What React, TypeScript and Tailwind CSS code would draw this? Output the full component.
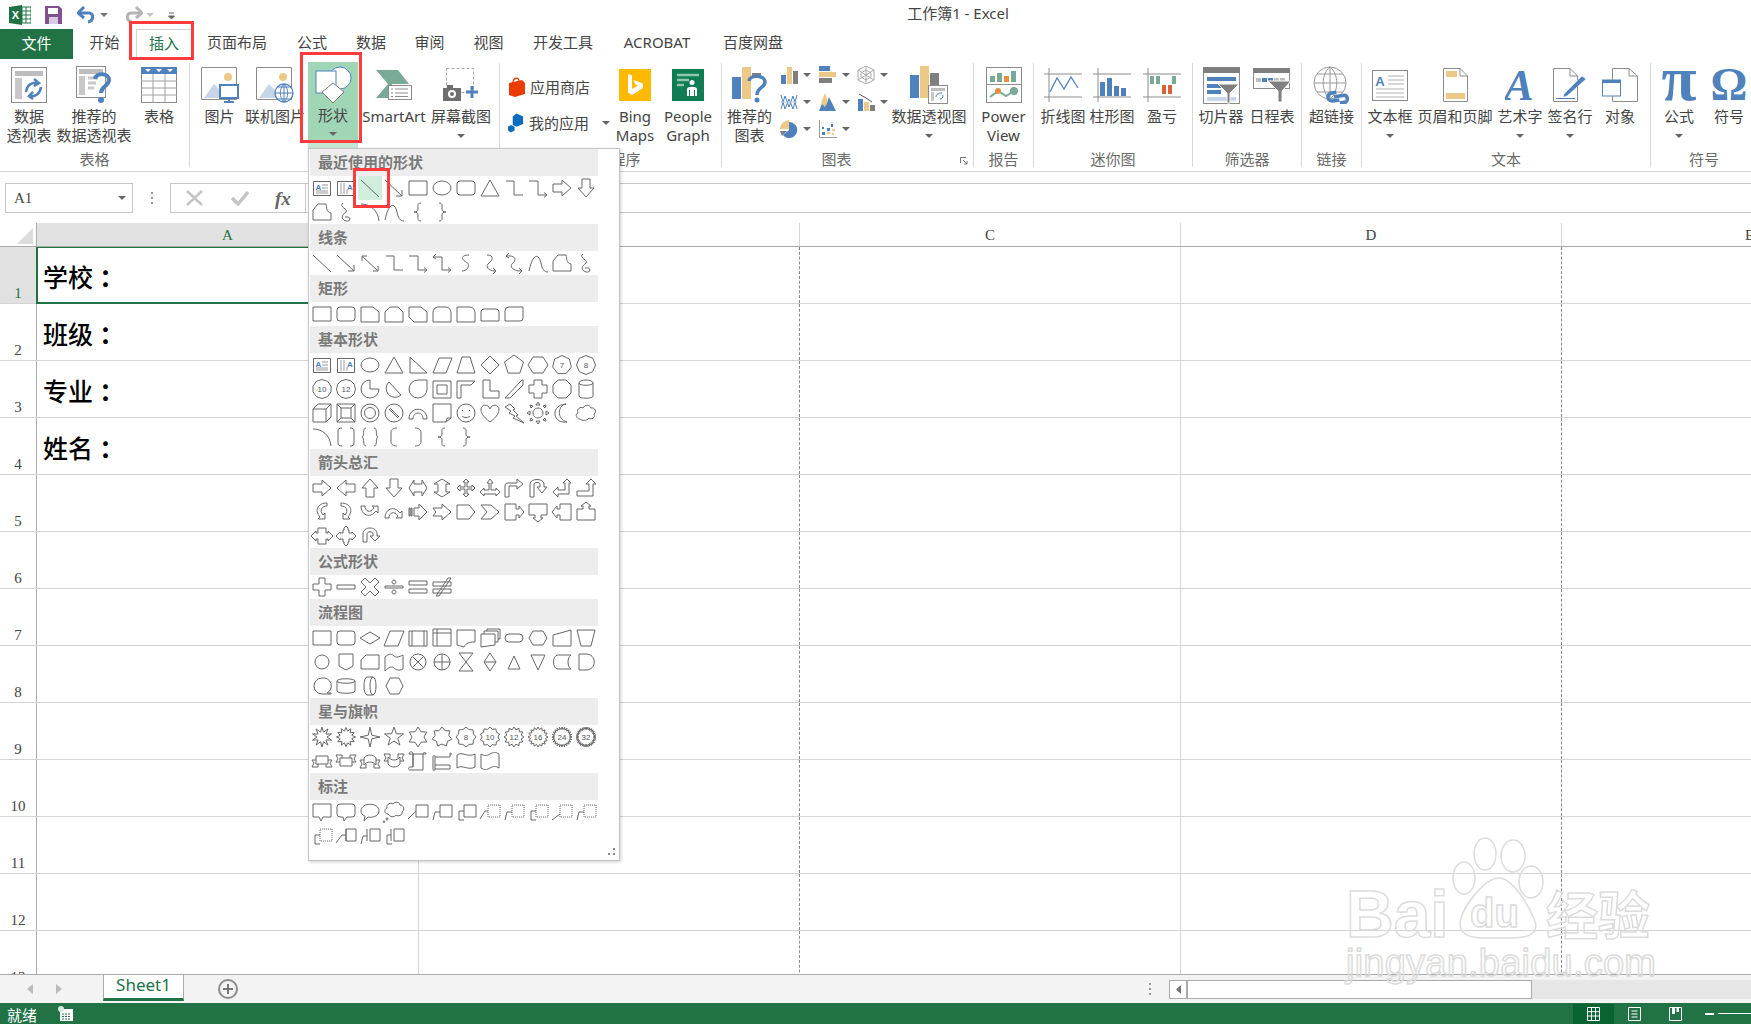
import type { ReactNode } from "react"

const BLUE = "#4f81bd"
const TAN = "#edc987"
const GRAY = "#7f7f7f"
const SAGE = "#78aa96"

function regular(n: number, R: number, rx = R) {
  const pts: string[] = []
  for (let i = 0; i < n; i++) {
    const a = (Math.PI * 2 * i) / n - Math.PI / 2
    pts.push((12 + rx * Math.cos(a)).toFixed(1) + " " + (12 + R * Math.sin(a)).toFixed(1))
  }
  return "M" + pts.join("L") + "Z"
}

function star(n: number, R: number, r: number) {
  const pts: string[] = []
  for (let i = 0; i < n * 2; i++) {
    const a = (Math.PI * i) / n - Math.PI / 2
    const k = i % 2 ? r : R
    pts.push((12 + k * Math.cos(a)).toFixed(1) + " " + (12 + k * Math.sin(a)).toFixed(1))
  }
  return "M" + pts.join("L") + "Z"
}

type Item = string | { d: string; t?: string; dot?: string }

const line = "M3 4L21 21"
const arrowLine = "M3 4L20 20M20 14V20H14"
const dblArrow = "M4 5L20 20M4 10V5H9M20 15V20H15"
const rect = "M3 5H21V19H3Z"
const ellipse = "M3 12a9 7 0 1 0 18 0a9 7 0 1 0-18 0Z"
const round = "M6 5H18a3 3 0 0 1 3 3V16a3 3 0 0 1-3 3H6a3 3 0 0 1-3-3V8a3 3 0 0 1 3-3Z"
const tri = "M12 4L21 20H3Z"
const elbow = "M4 5H12V19H21"
const elbowArrow = "M3 5H12V19H20M18 16.5l3 2.5-3 2.5"
const right = "M3 8H12V4L21 12L12 20V16H3Z"
const left = "M21 8H12V4L3 12L12 20V16H21Z"
const up = "M8 21V12H4L12 3L20 12H16V21Z"
const down = "M8 3V12H4L12 21L20 12H16V3Z"
const free = "M3 20V10L8 4H16C17 8 16 12 21 13V20Z"
const scribble = "M9 3C4 7 15 9 12 12C8 15 6 19 12 21C17 22 18 16 11 17"
const curve = "M3 20C7 1 13 3 15 12C16 18 18 21 22 21"
const lb = "M15 3C11 3 12 6 12 9C12 11 11 12 8 12C11 12 12 13 12 15C12 18 11 21 15 21"
const rb = "M9 3C13 3 12 6 12 9C12 11 13 12 16 12C13 12 12 13 12 15C12 18 13 21 9 21"
const cloud = "M6 18C2 18 1 13 4 12C2 8 7 5 9 7C11 3 16 4 17 7C21 6 23 11 20 13C22 17 17 19 15 17C13 20 8 20 6 18Z"

const recent: Item[] = ["tb", "vtb", line, arrowLine, rect, ellipse, round, tri, elbow, elbowArrow, right, down, free, scribble, "M3 4C12 4 20 10 21 21", curve, lb, rb]
const lines: Item[] = [line, arrowLine, dblArrow, elbow, elbowArrow, "M6 3L3 6L6 8M3 6H12V19H20M18 16.5l3 2.5-3 2.5", "M15 4C6 4 8 9 12 11C17 13 14 20 8 20", "M9 4C17 4 14 10 11 12C7 15 10 20 17 20M15 17l3 3-3 3", "M7 2L4 5L7 7M4 5C15 4 14 10 11 12C7 15 10 20 19 20M17 17l3 3-3 3", curve, free, scribble]
const rects: Item[] = [rect, round, "M3 5H15L21 10V20H3Z", "M8 5H16L21 10V20H3V10Z", "M3 5H15L21 10V20H8L3 15Z", "M8 5H16C19 5 21 8 21 11V20H3V10C3 8 5 5 8 5Z", "M3 5H16C19 5 21 8 21 11V20H3Z", "M6 7H18a3 3 0 0 1 3 3V19H3V10a3 3 0 0 1 3-3Z", "M7 5H21V16a3 3 0 0 1-3 3H3V9a4 4 0 0 1 4-4Z"]
const basic: Item[] = ["tb", "vtb", ellipse, tri, "M4 4L21 20H4Z", "M9 5H22L16 20H3Z", "M8 4H16L21 20H3Z", "M12 3L21 12L12 21L3 12Z", regular(5, 10), "M7 4H17L22 12L17 20H7L2 12Z", { d: regular(7, 9.5), t: "7" }, { d: regular(8, 9.5), t: "8" },
  { d: regular(10, 9.5), t: "10" }, { d: regular(12, 9.5), t: "12" }, "M12 3A9 9 0 1 0 21 12H12Z", "M7 5A8.5 8.5 0 1 0 19 18Z", "M12 3H21V12A9 9 0 1 1 12 3Z", "M3 4H21V21H3ZM7 8V17H17V8Z", "M3 4H21L17 8H7V21L3 21Z", "M5 3H12V14H21V21H5Z", "M3 21L20 3H21V8L8 21Z", "M8 3H16V8H21V16H16V21H8V16H3V8H8Z", "M8 3H16L21 8V16L16 21H8L3 16V8Z", "M5 6V19C5 22 19 22 19 19V6C19 2 5 2 5 6C5 9 19 9 19 6",
  "M3 8L8 3H21V16L16 21H3ZM3 8H16V21M16 8L21 3", "M3 3H21V21H3ZM7 7H17V17H7ZM3 3L7 7M21 3L17 7M3 21L7 17M21 21L17 17", "M3 12a9 9 0 1 0 18 0a9 9 0 1 0-18 0ZM6.5 12a5.5 5.5 0 1 0 11 0a5.5 5.5 0 1 0-11 0Z", "M3 12a9 9 0 1 0 18 0a9 9 0 1 0-18 0ZM7 8L16 17M8 7L17 16", "M3 18C3 5 21 5 21 18H17C17 10 7 10 7 18Z", "M3 3H21V17L16 21H3ZM16 21L17 17H21", "M3 12a9 9 0 1 0 18 0a9 9 0 1 0-18 0ZM8 9.5h1M15 9.5h1M8 15C10 17 14 17 16 15", "M12 21C4 15 3 11 3 8C3 4 10 2 12 8C14 2 21 4 21 8C21 11 20 15 12 21Z", "M8 3L13 8L11 9L16 14L14 15L22 22L11 17L13 15L7 12L9 10L3 6Z", "M12 7a5 5 0 1 0 .01 0ZM12 1L10 4H14ZM12 23L10 20H14ZM1 12L4 10V14ZM23 12L20 10V14ZM4 4L7 5L5 7ZM20 4L17 5L19 7ZM4 20L7 19L5 17ZM20 20L17 19L19 17Z", "M16 3C8 4 6 18 17 21C9 22 4 17 5 11C6 6 11 3 16 3Z", cloud,
  "M3 4C12 4 20 10 21 21", "M8 3C5 3 4 4 4 6V18C4 20 5 21 8 21M16 3C19 3 20 4 20 6V18C20 20 19 21 16 21", "M8 3C4 3 7 11 4 12C7 13 4 21 8 21M16 3C20 3 17 11 20 12C17 13 20 21 16 21", "M15 3C11 3 9 5 9 7V17C9 19 11 21 15 21", "M9 3C13 3 15 5 15 7V17C15 19 13 21 9 21", lb, rb]
const arrows: Item[] = [right, left, up, down, "M3 12L8 4V8H16V4L21 12L16 20V16H8V20Z", "M12 3L20 8H16V16H20L12 21L4 16H8V8H4Z", "M12 3L15 6H13V11H18V9L21 12L18 15V13H13V18H15L12 21L9 18H11V13H6V15L3 12L6 9V11H11V6H9Z", "M12 3L15 7H13V14H18V12L22 16L18 20V18H6V20L2 16L6 12V14H11V7H9Z", "M3 21V10C3 8 4 7 6 7H15V3L21 8L15 13V10H7V21Z", "M4 21V8C4 2 18 2 18 8V11H21L16 17L11 11H14V8C14 6 8 6 8 8V21Z", "M3 16L8 11V14H15V7H13L17 3L21 7H19V18H8V21Z", "M3 15H15V8H12L17 3L22 8H19V20H3Z",
  "M17 3C8 3 4 10 10 17L8 19H15V13L13 15C9 10 12 6 17 6Z", "M7 3C16 3 20 10 14 17L16 19H9V13L11 15C15 10 12 6 7 6Z", "M3 6C3 15 12 19 18 11L20 13V6H14L16 8C12 14 7 11 7 6Z", "M3 18C3 9 12 5 18 13L20 11V18H14L16 16C12 10 7 13 7 18Z", "M3 8H4V16H3ZM5 8H6V16H5ZM8 8H13V4L21 12L13 20V16H8Z", "M3 8H12V4L21 12L12 20V16H3L6 12Z", "M3 5H15L21 12L15 19H3Z", "M3 5H13L21 12L13 19H3L9 12Z", "M3 4H14V9H17V6L22 12L17 18V15H14V20H3Z", "M3 4H21V15H15V18H17L12 22L7 18H9V15H3Z", "M21 4H10V9H7V6L2 12L7 18V15H10V20H21Z", "M3 20H21V9H15V6H17L12 2L7 6H9V9H3Z",
  "M8 4H16V9H18V7L23 12L18 17V15H16V20H8V15H6V17L1 12L6 7V9H8Z", "M9 6H10V4L12 2L14 4V6H15V9H18V8L22 12L18 16V15H15V18H14V20L12 22L10 20V18H9V15H6V16L2 12L6 8V9H9Z", "M5 18V10C5 2 19 2 19 10V12H22L17 17L12 12H15V10C15 7 9 7 9 10V18Z"]
const equation: Item[] = ["M9 3H15V9H21V15H15V21H9V15H3V9H9Z", "M3 10H21V14H3Z", "M7 3L12 8L17 3L21 7L16 12L21 17L17 21L12 16L7 21L3 17L8 12L3 7Z", "M3 11H21V13H3ZM12 5a2 2 0 1 0 .01 0ZM12 15a2 2 0 1 0 .01 0Z", "M3 6H21V10H3ZM3 14H21V18H3Z", "M3 7H21V11H3ZM3 14H21V18H3ZM6 21L18 3L21 3L9 21Z"]
const flow: Item[] = [rect, round, "M12 6L22 12L12 18L2 12Z", "M8 5H22L16 20H2Z", "M3 5H21V20H3ZM6 5V20M18 5V20", "M3 3H21V20H3ZM3 7H21M7 3V20", "M3 4H21V16C15 16 12 17 10 21L3 19Z", "M3 8H17V19L3 21ZM6 8V5H20V16H17M9 5V3H22V13H20", "M7 8H17a4 4 0 0 1 0 8H7a4 4 0 0 1 0-8Z", "M7 5H17L21 12L17 19H7L3 12Z", "M3 9L21 4V20H3Z", "M3 4H21L17 20H7Z",
  "M5 12a7 7 0 1 0 14 0a7 7 0 1 0-14 0Z", "M5 4H19V16L12 20L5 16Z", "M8 5H21V19H3V10Z", "M3 7C7 3 10 4 12 6C14 8 17 7 21 5V19C17 21 14 20 12 18C10 16 7 17 3 21Z", "M4 12a8 8 0 1 0 16 0a8 8 0 1 0-16 0ZM6.5 6.5L17.5 17.5M17.5 6.5L6.5 17.5", "M4 12a8 8 0 1 0 16 0a8 8 0 1 0-16 0ZM4 12H20M12 4V20", "M5 3H19L5 21H19Z", "M12 3L18 12L12 21L6 12ZM6 12H18", "M12 6L18 19H6Z", "M5 5H19L12 20Z", "M8 5H21C17 8 17 16 21 19H8C2 19 2 5 8 5Z", "M5 4H12C23 4 23 20 12 20H5Z",
  "M12 4a8 8 0 1 0 0 16H21V19H17A8 8 0 0 0 12 4Z", "M3 7C3 4 21 4 21 7V17C21 20 3 20 3 17ZM3 7C3 10 21 10 21 7", "M9 3H15C19 3 19 21 15 21H9C5 21 5 3 9 3ZM15 3C11 3 11 21 15 21", "M8 4H17L21 12L17 20H8L4 12Z"]
const stars: Item[] = [star(10, 10, 5), star(12, 9.5, 6), star(4, 10, 2.5), star(5, 10, 4), star(6, 10, 6), star(7, 10, 7), { d: star(8, 10, 8), t: "8" }, { d: star(10, 10, 8), t: "10" }, { d: star(12, 10, 7.5), t: "12" }, { d: star(16, 10, 7.5), t: "16" }, { d: star(24, 10, 7.5), t: "24" }, { d: star(32, 10, 7.5), t: "32" },
  "M6 7H18V15H6ZM6 11H2L4 14L2 18H8V15M18 11H22L20 14L22 18H16V15", "M6 9H18V17H6ZM6 13H2L4 10L2 6H8V9M18 13H22L20 10L22 6H16V9", "M6 9C9 5 15 5 18 9V16C15 12 9 12 6 16ZM6 11H2L4 15L2 19H8V15M18 11H22L20 15L22 19H16V15", "M6 8C9 12 15 12 18 8V15C15 19 9 19 6 15ZM6 12H2L4 9L2 5H8V9M18 12H22L20 9L22 5H16V9", "M7 5C7 2 3 2 3 5H20C20 3 17 3 17 5V21H4C2 21 2 18 4 18H7ZM7 5V18", "M3 8C3 6 5 6 5 8V20C5 22 3 22 3 20ZM5 8H20V4C22 4 22 6 20 6M5 20H20V16H5", "M3 6C8 2 14 9 21 5V18C14 22 8 15 3 19Z", "M3 5C6 7 9 7 12 5C15 3 18 3 21 5V19C18 17 15 17 12 19C9 21 6 21 3 19Z"]
const callouts: Item[] = ["M3 4H21V17H13L11 21L9 17H3Z", "M6 4H18a3 3 0 0 1 3 3V14a3 3 0 0 1-3 3H13L10 21L9 17H6a3 3 0 0 1-3-3V7a3 3 0 0 1 3-3Z", "M3 11C3 2 21 2 21 11C21 17 12 18 10 17L6 21L7 16C4 15 3 13 3 11Z", "M6 14C2 14 2 9 5 8C4 4 9 2 11 4C13 1 18 2 18 5C22 5 23 10 20 12C21 15 16 17 14 15C12 18 8 17 6 14ZM5 18a1 1 0 1 0 .01 0ZM2 21a.8.8 0 1 0 .01 0Z", "M10 5H22V17H10ZM10 11L2 19", "M10 5H22V17H10ZM10 12H5L3 20", "M10 5H22V17H10ZM10 11H5V20H10", { d: "M10 11L7 11L2 19", dot: "M10 5H22V17H10Z" }, { d: "M10 12H5L3 20", dot: "M10 5H22V17H10Z" }, { d: "M10 11H5V20H10", dot: "M10 5H22V17H10Z" }, { d: "M10 14L2 20", dot: "M10 5H22V17H10Z" }, { d: "M10 12H5L3 20", dot: "M10 5H22V17H10Z" },
  { d: "M10 11H5V20H10", dot: "M10 5H22V17H10Z" }, "M12 5H22V17H12ZM12 11L8 11L2 19M12 5V17", "M12 5H22V17H12ZM9 5V17M9 12H5L3 20", "M12 5H22V17H12ZM9 5V17M9 11H5V20H10"]

const sections: { title: string; items: Item[] }[] = [
  { title: "最近使用的形状", items: recent },
  { title: "线条", items: lines },
  { title: "矩形", items: rects },
  { title: "基本形状", items: basic },
  { title: "箭头总汇", items: arrows },
  { title: "公式形状", items: equation },
  { title: "流程图", items: flow },
  { title: "星与旗帜", items: stars },
  { title: "标注", items: callouts },
]

function ShapeGlyph({ item }: { item: Item }) {
  if (item === "tb" || item === "vtb") {
    return (
      <svg width="24" height="24" viewBox="0 0 24 24" fill="none" stroke="#666" strokeWidth="1">
        <path d="M3.5 5.5H20.5V19.5H3.5Z" />
        {item === "tb" ? <path d="M12 9H18M12 12H18M6 15H18M6 17H18" stroke="#999" /> : <path d="M7 7V18M10 7V18M13 14V18" stroke="#999" />}
        <text x={item === "tb" ? 8.5 : 16} y="13.5" fontSize="8" fontWeight="700" textAnchor="middle" fill={BLUE} stroke="none" fontFamily="Liberation Sans, sans-serif">A</text>
      </svg>
    )
  }
  const d = typeof item === "string" ? item : item.d
  const t = typeof item === "string" ? undefined : item.t
  const dot = typeof item === "string" ? undefined : item.dot
  return (
    <svg width="24" height="24" viewBox="0 0 24 24" fill="none" stroke="#666" strokeWidth="1">
      <path d={d} />
      {dot && <path d={dot} strokeDasharray="1 1" />}
      {t && <text x="12" y="15" fontSize="8" textAnchor="middle" fill="#555" stroke="none" fontFamily="Liberation Sans, sans-serif">{t}</text>}
    </svg>
  )
}

function Caret({ color = "#666" }: { color?: string }) {
  return (
    <svg width="8" height="4" viewBox="0 0 8 4" className="shrink-0">
      <path d="M0 0H8L4 4Z" fill={color} />
    </svg>
  )
}

function RibbonButton({ w, icon, lines, caret, className = "" }: { w: number; icon: ReactNode; lines: string[]; caret?: boolean; className?: string }) {
  return (
    <div className={"flex shrink-0 flex-col items-center " + className} style={{ width: w }}>
      <div className="flex h-[44px] items-center justify-center">{icon}</div>
      {lines.map((l) => (
        <div key={l} className="h-[19px] whitespace-nowrap text-[15px] leading-[19px]">{l}</div>
      ))}
      {caret && <div className="flex h-[19px] items-center justify-center"><Caret /></div>}
    </div>
  )
}

function Group({ w, label, labelClass = "", children }: { w: number; label: string; labelClass?: string; children: ReactNode }) {
  return (
    <div className="relative flex shrink-0 flex-col border-r border-[#d8d8d8]" style={{ width: w }}>
      <div className="flex h-[89px]">{children}</div>
      <div className={"h-[16px] whitespace-nowrap text-center text-[15px] leading-[16px] text-[#6a6a6a] " + labelClass}>{label}</div>
    </div>
  )
}

function PivotIcon() {
  return (
    <svg width="36" height="36" viewBox="0 0 36 36">
      <rect x=".5" y=".5" width="35" height="35" fill="#fff" stroke="#8c8c8c" />
      <rect x="4" y="4" width="28" height="5" fill="#bdbdbd" />
      <rect x="4" y="11" width="7" height="21" fill="#c8c8c8" />
      <path d="M15 25C16 17 22 15 27 16M23 12L28 16L23 19M30 20C29 27 24 30 19 29M22 25L18 29L22 32" fill="none" stroke={BLUE} strokeWidth="2.5" />
    </svg>
  )
}

function RecPivotIcon() {
  return (
    <svg width="36" height="38" viewBox="0 0 36 38">
      <rect x=".5" y=".5" width="29" height="31" fill="#fff" stroke="#8c8c8c" />
      <rect x="3" y="3" width="24" height="5" fill="#bdbdbd" />
      <rect x="3" y="10" width="6" height="19" fill="#c8c8c8" />
      <path d="M12 12H22M12 17H20M12 22H18" stroke="#c8c8c8" strokeWidth="3" />
      <path d="M19 13C20 6 33 7 33 14C33 20 25 20 25 27" fill="none" stroke={BLUE} strokeWidth="4" />
      <circle cx="25" cy="34" r="3" fill={BLUE} />
    </svg>
  )
}

function TableIcon() {
  return (
    <svg width="36" height="36" viewBox="0 0 36 36">
      <rect x=".5" y=".5" width="35" height="35" fill="#fff" stroke="#8c8c8c" />
      <rect x="0" y="0" width="36" height="7" fill={BLUE} />
      <path d="M4 2H10L7 5ZM15 2H21L18 5ZM26 2H32L29 5Z" fill="#fff" />
      <path d="M0 14H36M0 21H36M0 28H36M12 7V36M24 7V36" stroke="#a0a0a0" fill="none" />
    </svg>
  )
}

function PictureBase() {
  return (
    <>
      <path d="M.5 .5H35.5V32.5H.5Z" fill="#fff" stroke="#8c8c8c" />
      <circle cx="27" cy="10" r="4" fill={TAN} />
      <path d="M3 31L13 17L20 24L24 21L30 31Z" fill="#c6d5e8" />
    </>
  )
}

function PictureIcon() {
  return (
    <svg width="38" height="36" viewBox="0 0 38 36">
      <PictureBase />
      <rect x="19" y="18" width="18" height="13" fill="#fff" stroke={BLUE} strokeWidth="2" />
      <path d="M28 31V35M23 35H33" stroke={BLUE} strokeWidth="2" />
    </svg>
  )
}

function OnlinePictureIcon() {
  return (
    <svg width="38" height="36" viewBox="0 0 38 36">
      <PictureBase />
      <circle cx="28" cy="26" r="9" fill="#fff" stroke={BLUE} strokeWidth="1.3" />
      <path d="M19 26H37M28 17V35M21 20H35M21 32H35M28 17C23 22 23 30 28 35M28 17C33 22 33 30 28 35" fill="none" stroke={BLUE} />
    </svg>
  )
}

function ShapesIcon() {
  return (
    <svg width="38" height="40" viewBox="0 0 38 40">
      <circle cx="26" cy="14" r="11" fill="#fff" stroke={BLUE} />
      <rect x="2" y="7" width="20" height="22" fill="#fff" stroke={BLUE} />
      <path d="M19 19L30 28L19 39L8 28Z" fill="#fff" stroke={GRAY} />
    </svg>
  )
}

function SmartArtIcon() {
  return (
    <svg width="36" height="30" viewBox="0 0 36 30">
      <path d="M0 0H22L33 14H12Z" fill={SAGE} />
      <path d="M12 14L0 28H12L16 22V14Z" fill={SAGE} />
      <rect x="12.5" y="15.5" width="23" height="14" fill="#fff" stroke="#8c8c8c" />
      <path d="M15 19H17M19 19H32M15 23H17M19 23H32M15 26.5H17M19 26.5H32" stroke="#8c8c8c" />
    </svg>
  )
}

function ScreenshotIcon() {
  return (
    <svg width="36" height="34" viewBox="0 0 36 34">
      <rect x="3.5" y=".5" width="27" height="24" fill="none" stroke="#aaa" strokeDasharray="3 2" />
      <rect x="0" y="20" width="18" height="13" fill="#6e6e6e" />
      <rect x="4" y="17" width="6" height="3" fill="#6e6e6e" />
      <circle cx="9" cy="26" r="4" fill="#fff" />
      <circle cx="9" cy="26" r="2" fill="#6e6e6e" />
      <path d="M29 18V30M23 24H35" stroke={BLUE} strokeWidth="3" />
    </svg>
  )
}

function StoreIcon() {
  return (
    <svg width="18" height="20" viewBox="0 0 18 20">
      <path d="M1 6L14 3L17 6V17L7 20L1 18Z" fill="#eb3c00" />
      <path d="M5 6C5 0 11 0 11 4" fill="none" stroke="#eb3c00" strokeWidth="1.3" />
    </svg>
  )
}

function MyAppsIcon() {
  return (
    <svg width="18" height="20" viewBox="0 0 18 20">
      <path d="M9 0L16 3V11L9 14L5 12V3Z" fill="#0f6cbd" />
      <path d="M3 12L7 14V18L3 20L0 18V14Z" fill="#0f6cbd" />
    </svg>
  )
}

function BingIcon() {
  return (
    <svg width="32" height="32" viewBox="0 0 32 32">
      <rect width="32" height="32" fill="#ffb900" />
      <path d="M9 5L13 6.5V20L19 16.5L16 15L14.5 11L24 14.5V19L13 26L9 23.5Z" fill="#fff" />
    </svg>
  )
}

function PeopleIcon() {
  return (
    <svg width="32" height="32" viewBox="0 0 32 32">
      <rect width="32" height="32" fill="#107c54" />
      <path d="M5 6H27M5 11H17M5 16H12" stroke="#8fc7ae" strokeWidth="2.5" />
      <circle cx="20" cy="13.5" r="2.5" fill="#fff" />
      <path d="M15 27V20C15 17 25 17 25 20V27H23V21H22V27H18V21H17V27Z" fill="#fff" />
    </svg>
  )
}

function RecChartIcon() {
  return (
    <svg width="36" height="36" viewBox="0 0 36 36">
      <rect x="0" y="10" width="9" height="22" fill={BLUE} />
      <rect x="10" y="0" width="9" height="32" fill={TAN} />
      <rect x="20" y="6" width="9" height="4" fill={GRAY} />
      <path d="M17 14C18 7 33 8 33 15C33 21 25 20 25 28" fill="none" stroke={BLUE} strokeWidth="3.5" />
      <circle cx="25" cy="33" r="2.5" fill={BLUE} />
    </svg>
  )
}

function PivotChartIcon() {
  return (
    <svg width="38" height="38" viewBox="0 0 38 38">
      <rect x="0" y="9" width="9" height="23" fill={BLUE} />
      <rect x="10" y="0" width="9" height="32" fill={TAN} />
      <rect x="20" y="7" width="9" height="12" fill={GRAY} />
      <rect x="18.5" y="19.5" width="19" height="18" fill="#fff" stroke="#8c8c8c" />
      <rect x="21" y="22" width="14" height="3" fill="#bdbdbd" />
      <rect x="21" y="26" width="3" height="9" fill="#c8c8c8" />
      <path d="M26 31C26 28 29 27 32 27M30 33C32 33 33 32 33 29" fill="none" stroke={BLUE} />
    </svg>
  )
}

function SmallChart({ kind }: { kind: string }) {
  const g: Record<string, ReactNode> = {
    col: <><rect x="1" y="9" width="5" height="9" fill={BLUE} /><rect x="7" y="1" width="5" height="17" fill={TAN} /><rect x="13" y="5" width="5" height="13" fill={GRAY} /></>,
    bar: <><rect x="0" y="0" width="11" height="5" fill={BLUE} /><rect x="0" y="6" width="17" height="5" fill={TAN} /><rect x="0" y="12" width="13" height="5" fill={GRAY} /></>,
    radar: <path d="M9 0V18M1 4L17 14M17 4L1 14M9 0L17 4V14L9 18L1 14V4ZM9 4L14 7V11L9 14L4 11V7Z" fill="none" stroke="#aaa" />,
    line: <><path d="M1 2L5 16L9 6L13 16L17 2" fill="none" stroke={BLUE} /><path d="M1 16L5 3L9 14L13 3L17 16" fill="none" stroke={BLUE} /><path d="M1 9H17" stroke="#b0c7e0" /></>,
    area: <><path d="M0 18L4 8L7 12L10 4L17 18Z" fill={BLUE} /><path d="M2 10L6 0L9 8L6 14Z" fill={TAN} /></>,
    combo: <><rect x="1" y="6" width="5" height="12" fill={BLUE} /><rect x="7" y="9" width="5" height="9" fill={TAN} /><rect x="13" y="12" width="5" height="6" fill={GRAY} /><path d="M2 1L9 5L15 9" fill="none" stroke="#555" /></>,
    pie: <><path d="M9 2A8 8 0 1 1 3 15L9 10Z" fill={BLUE} /><path d="M9 0V9L0 9A9 9 0 0 1 9 0Z" fill={TAN} /><path d="M0 11H7L2 16Z" fill={GRAY} /></>,
    scatter: <><path d="M.5 0V17.5H18" fill="none" stroke="#999" /><path d="M3 12h3v3h-3zM8 8h3v3h-3zM12 4h2v3h-2zM3 7h2v2h-2z" fill={BLUE} /><path d="M8 12h3v2h-3zM13 9h3v2h-3zM13 13h2v2h-2z" fill={TAN} /></>,
  }
  return (
    <svg width="18" height="18" viewBox="0 0 18 18" className="shrink-0">{g[kind]}</svg>
  )
}

function PowerViewIcon() {
  return (
    <svg width="36" height="36" viewBox="0 0 36 36">
      <rect x=".5" y=".5" width="35" height="35" fill="#fff" stroke="#8c8c8c" />
      <path d="M.5 17.5H35.5" stroke="#8c8c8c" />
      <rect x="4" y="9" width="5" height="6" fill={SAGE} />
      <rect x="11" y="6" width="5" height="9" fill={SAGE} />
      <rect x="18" y="9" width="5" height="6" fill="#e58f3c" />
      <rect x="25" y="4" width="5" height="11" fill={SAGE} />
      <path d="M4 30L12 24L20 29L28 24" fill="none" stroke={SAGE} strokeWidth="2" />
      <circle cx="12" cy="24" r="3" fill="#e58f3c" />
      <circle cx="28" cy="24" r="4" fill={SAGE} />
    </svg>
  )
}

function Spark({ children }: { children: ReactNode }) {
  return (
    <svg width="38" height="34" viewBox="0 0 38 34">
      <path d="M0 6H38M0 29H38M5 0V34" stroke="#8c8c8c" fill="none" />
      {children}
    </svg>
  )
}

function SlicerIcon() {
  return (
    <svg width="37" height="37" viewBox="0 0 37 37">
      <rect x=".5" y=".5" width="36" height="36" fill="#fff" stroke="#8c8c8c" />
      <rect width="37" height="6" fill={GRAY} />
      <rect x="4" y="10" width="29" height="4" fill={BLUE} />
      <rect x="4" y="17" width="14" height="4" fill={BLUE} />
      <rect x="4" y="23" width="14" height="4" fill={BLUE} />
      <rect x="4" y="30" width="29" height="4" fill="#c6d5e8" />
      <path d="M15 17H36L27 26V36H24V26Z" fill={GRAY} stroke="#fff" />
    </svg>
  )
}

function TimelineIcon() {
  return (
    <svg width="38" height="34" viewBox="0 0 38 34">
      <rect x=".5" y=".5" width="36" height="20" fill="#fff" stroke="#8c8c8c" />
      <rect width="37" height="5" fill={GRAY} />
      <path d="M3 10h5v4h-5z" fill="#bdbdbd" />
      <path d="M9 10h5v4h-5zM15 10h5v4h-5z" fill={BLUE} />
      <path d="M21 10h5v4h-5zM27 10h5v4h-5z" fill="#bdbdbd" />
      <path d="M15 13H38L29 23V34H25V23Z" fill={GRAY} stroke="#fff" />
    </svg>
  )
}

function LinkIcon() {
  return (
    <svg width="38" height="38" viewBox="0 0 38 38">
      <circle cx="17" cy="17" r="16" fill="none" stroke="#999" />
      <path d="M1 17H33M17 1V33M4 8H30M4 26H30M17 1C8 8 8 26 17 33M17 1C26 8 26 26 17 33" fill="none" stroke="#999" />
      <path d="M24 26H19a4 4 0 0 0 0 8H26M21 30H32a4 4 0 0 1 0 7H26" transform="rotate(-8 26 31)" fill="none" stroke={BLUE} strokeWidth="3.5" />
    </svg>
  )
}

function TextBoxIcon() {
  return (
    <svg width="36" height="31" viewBox="0 0 36 31">
      <rect x=".5" y=".5" width="35" height="30" fill="#fff" stroke="#8c8c8c" />
      <text x="8" y="16" fontSize="13" fontWeight="700" textAnchor="middle" fill={BLUE} fontFamily="Liberation Sans, sans-serif">A</text>
      <path d="M16 6H32M16 10H32M16 14H32M4 19H32M4 23H32M4 27H32" stroke="#b0b0b0" />
    </svg>
  )
}

function HeaderIcon() {
  return (
    <svg width="25" height="34" viewBox="0 0 25 34">
      <path d="M.5 .5H17L24.5 8V33.5H.5Z" fill="#fff" stroke="#8c8c8c" />
      <path d="M17 .5V8H24.5" fill="none" stroke="#8c8c8c" />
      <rect x="3" y="3" width="11" height="6" fill={TAN} />
      <rect x="3" y="25" width="19" height="6" fill={TAN} />
    </svg>
  )
}

function WordArtIcon() {
  return (
    <svg width="30" height="34" viewBox="0 0 30 34">
      <text x="14" y="32" fontSize="44" fontWeight="700" fontStyle="italic" textAnchor="middle" fill={BLUE} fontFamily="Liberation Serif, serif">A</text>
    </svg>
  )
}

function SignIcon() {
  return (
    <svg width="34" height="35" viewBox="0 0 34 35">
      <path d="M.5 .5H17L24.5 8V33.5H.5Z" fill="#fff" stroke="#8c8c8c" />
      <path d="M17 .5V8H24.5" fill="none" stroke="#8c8c8c" />
      <path d="M3 30.5H22" stroke={BLUE} />
      <path d="M11 26L29 8L33 11L14 28L10 29Z" fill={BLUE} stroke="#fff" strokeWidth=".5" />
    </svg>
  )
}

function ObjectIcon() {
  return (
    <svg width="36" height="34" viewBox="0 0 36 34">
      <path d="M10.5 .5H27L35.5 8V33.5H10.5Z" fill="#fff" stroke="#8c8c8c" />
      <path d="M27 .5V8H35.5" fill="none" stroke="#8c8c8c" />
      <rect x=".5" y="12" width="18" height="16" fill="#fff" stroke={BLUE} />
      <rect x="0" y="12" width="19" height="3" fill={BLUE} />
    </svg>
  )
}

function Glyph({ c, w, size }: { c: string; w: number; size: number }) {
  return (
    <svg width={w} height="36" viewBox={"0 0 " + w + " 36"}>
      <text x={w / 2} y="33" fontSize={size} fontWeight="700" textAnchor="middle" fill={BLUE} fontFamily="Liberation Serif, serif">{c}</text>
    </svg>
  )
}

const tabs: [string, number][] = [["开始", 63], ["插入", 56], ["页面布局", 90], ["公式", 60], ["数据", 58], ["审阅", 59], ["视图", 59], ["开发工具", 90], ["ACROBAT", 98], ["百度网盘", 94]]

const rowData = ["学校", "班级", "专业", "姓名", "", "", "", "", "", "", "", "", ""]

function Ribbon() {
  return (
    <div className="flex h-[113px] shrink-0 border-b border-[#d4d4d4] bg-white py-[4px] text-[#444]">
      <Group w={190} label="表格">
        <RibbonButton w={58} icon={<PivotIcon />} lines={["数据", "透视表"]} />
        <RibbonButton w={72} icon={<RecPivotIcon />} lines={["推荐的", "数据透视表"]} />
        <RibbonButton w={58} icon={<TableIcon />} lines={["表格"]} />
      </Group>
      <Group w={310} label="插图">
        <RibbonButton w={59} icon={<PictureIcon />} lines={["图片"]} />
        <RibbonButton w={52} icon={<OnlinePictureIcon />} lines={["联机图片"]} />
        <RibbonButton w={50} icon={<ShapesIcon />} lines={["形状"]} caret className="ml-[7px] -mt-px h-[81px] bg-[#a0d6b6] pt-px" />
        <RibbonButton w={72} icon={<SmartArtIcon />} lines={["SmartArt"]} />
        <RibbonButton w={62} icon={<ScreenshotIcon />} lines={["屏幕截图"]} caret />
      </Group>
      <Group w={222} label="应用程序">
        <div className="flex w-[110px] shrink-0 flex-col gap-[16px] pl-[8px] pt-[14px]">
          <div className="flex h-[20px] items-center gap-[4px] whitespace-nowrap text-[15px]"><StoreIcon /><span>应用商店</span></div>
          <div className="flex h-[20px] items-center gap-[4px] whitespace-nowrap text-[15px]"><MyAppsIcon /><span>我的应用</span><span className="ml-[9px]"><Caret /></span></div>
        </div>
        <RibbonButton w={50} icon={<BingIcon />} lines={["Bing", "Maps"]} />
        <RibbonButton w={56} icon={<PeopleIcon />} lines={["People", "Graph"]} />
      </Group>
      <Group w={252} label="图表" labelClass="pr-[22px]">
        <RibbonButton w={55} icon={<RecChartIcon />} lines={["推荐的", "图表"]} />
        <div className="-mt-[2px] grid w-[113px] shrink-0 grid-cols-[39px_38px_36px] auto-rows-[27px]">
          {["col", "bar", "radar", "line", "area", "combo", "pie", "scatter"].map((k) => (
            <div key={k} className="flex items-center gap-[5px] pl-[3px]"><SmallChart kind={k} /><Caret /></div>
          ))}
        </div>
        <RibbonButton w={78} icon={<PivotChartIcon />} lines={["数据透视图"]} caret />
        <svg width="8" height="8" viewBox="0 0 8 8" className="absolute bottom-[2px] right-[5px]">
          <path d="M.5 6V.5H6M3 3L7 7M7 4V7H4" fill="none" stroke="#777" />
        </svg>
      </Group>
      <Group w={60} label="报告">
        <RibbonButton w={59} icon={<PowerViewIcon />} lines={["Power", "View"]} />
      </Group>
      <Group w={159} label="迷你图">
        <RibbonButton w={58} icon={<Spark><path d="M6 24L13 10L20 21L27 9L34 20" fill="none" stroke={BLUE} strokeWidth="1.3" /></Spark>} lines={["折线图"]} />
        <RibbonButton w={40} icon={<Spark><path d="M7 14h5v14h-5zM14 10h5v18h-5zM21 18h5v10h-5zM28 20h5v8h-5z" fill={BLUE} /></Spark>} lines={["柱形图"]} />
        <RibbonButton w={60} icon={<Spark><path d="M7 8h4v8h-4zM13 8h4v8h-4zM29 8h4v8h-4z" fill={SAGE} /><path d="M19 17h4v9h-4zM25 17h4v9h-4z" fill="#d9623b" /></Spark>} lines={["盈亏"]} />
      </Group>
      <Group w={109} label="筛选器">
        <RibbonButton w={56} icon={<SlicerIcon />} lines={["切片器"]} />
        <RibbonButton w={46} icon={<TimelineIcon />} lines={["日程表"]} />
      </Group>
      <Group w={60} label="链接">
        <RibbonButton w={59} icon={<LinkIcon />} lines={["超链接"]} />
      </Group>
      <Group w={289} label="文本">
        <RibbonButton w={56} icon={<TextBoxIcon />} lines={["文本框"]} caret />
        <RibbonButton w={74} icon={<HeaderIcon />} lines={["页眉和页脚"]} />
        <RibbonButton w={56} icon={<WordArtIcon />} lines={["艺术字"]} caret />
        <RibbonButton w={44} icon={<SignIcon />} lines={["签名行"]} caret />
        <RibbonButton w={56} icon={<ObjectIcon />} lines={["对象"]} />
      </Group>
      <div className="relative flex w-[100px] shrink-0 flex-col">
        <div className="flex h-[89px]">
          <RibbonButton w={56} icon={<Glyph c="π" w={34} size={64} />} lines={["公式"]} caret />
          <RibbonButton w={44} icon={<Glyph c="Ω" w={34} size={46} />} lines={["符号"]} />
        </div>
        <div className="h-[16px] pl-[6px] text-center text-[15px] leading-[16px] text-[#6a6a6a]">符号</div>
      </div>
    </div>
  )
}

function ShapesMenu() {
  return (
    <div className="absolute left-[308px] top-[148px] z-10 h-[713px] w-[312px] border border-[#c6c6c6] bg-white pl-[1px] shadow-[1px_1px_3px_rgba(0,0,0,0.2)]">
      {sections.map((s) => (
        <div key={s.title} className="w-[288px]">
          <div className="h-[27px] bg-[#ededed] pl-[8px] text-[15px] font-bold leading-[27px] text-[#7a7a7a]">{s.title}</div>
          <div className="grid grid-cols-[repeat(12,24px)] auto-rows-[24px]">
            {s.items.map((it, i) => (
              <div key={i} className={s.title === "最近使用的形状" && i === 2 ? "bg-[#d2eedd]" : ""}>
                <ShapeGlyph item={it} />
              </div>
            ))}
          </div>
        </div>
      ))}
      <svg width="10" height="10" viewBox="0 0 10 10" className="absolute bottom-[3px] right-[3px]">
        <path d="M7 1h2v2h-2zM7 6h2v2h-2zM2 6h2v2h-2z" fill="#888" />
      </svg>
    </div>
  )
}

function Watermark() {
  return (
    <svg width="330" height="160" viewBox="0 0 330 160" className="pointer-events-none absolute left-[1340px] top-[832px] z-20" fill="none" stroke="#dcdcdc" strokeWidth="1.5">
      <ellipse cx="124" cy="46" rx="11" ry="16" />
      <ellipse cx="145" cy="22" rx="11" ry="16" />
      <ellipse cx="173" cy="24" rx="12" ry="16" />
      <ellipse cx="191" cy="50" rx="12" ry="16" />
      <path d="M159 46C175 46 196 86 196 94C196 108 172 106 158 106C142 106 120 108 120 92C120 78 144 46 159 46Z" />
      <g fontFamily="Liberation Sans, sans-serif" fontWeight="700">
        <text x="6" y="105" fontSize="66">Bai</text>
        <text x="130" y="95" fontSize="40">du</text>
      </g>
      <text x="206" y="103" fontSize="52" fontWeight="700" fontFamily="Noto Sans CJK SC, sans-serif">经验</text>
      <text x="6" y="144" fontSize="38" textLength="310" fontFamily="Liberation Sans, sans-serif">jingyan.baidu.com</text>
    </svg>
  )
}

export default function App() {
  return (
    <div className="relative flex h-[1024px] w-[1751px] flex-col overflow-hidden bg-white [font-family:'Noto_Sans','Noto_Sans_CJK_SC',sans-serif]">
      {/* title bar */}
      <div className="relative flex h-[29px] shrink-0 items-center bg-white pl-[9px]">
        <svg width="22" height="20" viewBox="0 0 22 20">
          <path d="M0 2L13 0V20L0 18Z" fill="#207245" />
          <path d="M13 2H22V18H13Z" fill="#fff" stroke="#207245" />
          <path d="M13 6H22M13 10H22M13 14H22M17 2V18" stroke="#207245" />
          <text x="6.5" y="14" fontSize="11" fontWeight="700" fill="#fff" textAnchor="middle" fontFamily="Liberation Sans, sans-serif">X</text>
        </svg>
        <svg width="17" height="18" viewBox="0 0 17 18" className="ml-[14px]">
          <path d="M0 0H14L17 3V18H0Z" fill="#80508f" />
          <rect x="3" y="2" width="10" height="6" fill="#fff" />
          <rect x="4" y="11" width="9" height="7" fill="#d9c9e0" />
        </svg>
        <svg width="20" height="18" viewBox="0 0 20 18" className="ml-[15px]">
          <path d="M3 7H12C17 7 17 15 11 16" fill="none" stroke={BLUE} strokeWidth="3" />
          <path d="M7 1L1 7L7 12" fill="none" stroke={BLUE} strokeWidth="3" />
        </svg>
        <span className="ml-[3px]"><Caret color="#777" /></span>
        <svg width="20" height="18" viewBox="0 0 20 18" className="ml-[15px]">
          <path d="M17 7H8C3 7 3 15 9 16" fill="none" stroke="#b5b5b5" strokeWidth="3" />
          <path d="M13 1L19 7L13 12" fill="none" stroke="#b5b5b5" strokeWidth="3" />
        </svg>
        <span className="ml-[3px]"><Caret color="#c4c4c4" /></span>
        <svg width="7" height="8" viewBox="0 0 7 8" className="ml-[14px] mt-[2px]">
          <path d="M1 1H6M.5 4H6.5L3.5 7Z" stroke="#666" fill="#666" strokeWidth="1" />
        </svg>
        <div className="absolute left-[905px] top-[3px] w-[106px] whitespace-nowrap text-center text-[15px] leading-[20px] text-[#444]">工作簿1 - Excel</div>
      </div>

      {/* tabs */}
      <div className="flex h-[30px] shrink-0 text-[15px] text-[#444]">
        <div className="flex w-[73px] items-center justify-center bg-[#217346] pb-[2px] text-white">文件</div>
        {tabs.map(([t, w]) => (
          <div key={t} style={{ width: w }} className={"flex items-center justify-center whitespace-nowrap pb-[3px] " + (t === "插入" ? "relative z-[1] -mb-px border border-b-0 border-[#d4d4d4] bg-white text-[#217346]" : "")}>{t}</div>
        ))}
      </div>

      <Ribbon />

      {/* formula bar */}
      <div className="flex h-[51px] shrink-0 bg-white pt-[11px]">
        <div className="ml-[5px] flex h-[30px] w-[128px] items-center justify-between border border-[#c6c6c6] pl-[8px] pr-[6px] text-[15px] text-[#444] [font-family:'Liberation_Serif',serif]">
          <span>A1</span>
          <Caret />
        </div>
        <div className="flex h-[30px] w-[37px] flex-col items-center justify-center gap-[3px]">
          <i className="h-[2px] w-[2px] bg-[#999]" /><i className="h-[2px] w-[2px] bg-[#999]" /><i className="h-[2px] w-[2px] bg-[#999]" />
        </div>
        <div className="flex h-[30px] w-[136px] items-center border border-[#c6c6c6] pl-[15px]">
          <svg width="17" height="16" viewBox="0 0 17 16"><path d="M1 1L16 15M16 1L1 15" stroke="#c4c4c4" strokeWidth="2.5" /></svg>
          <svg width="18" height="16" viewBox="0 0 18 16" className="ml-[28px]"><path d="M1 8L7 14L17 2" fill="none" stroke="#c4c4c4" strokeWidth="3.5" /></svg>
          <span className="ml-[26px] text-[19px] font-bold italic leading-none text-[#666] [font-family:'Liberation_Serif',serif]">fx</span>
        </div>
        <div className="h-[30px] flex-1 border-y border-[#c6c6c6]" />
      </div>

      {/* column headers */}
      <div className="flex h-[24px] shrink-0 border-b border-[#ababab] text-[15px] leading-[24px] text-[#444] [font-family:'Liberation_Serif',serif]">
        <div className="flex w-[37px] shrink-0 items-end justify-end border-r border-[#ababab] pb-[2px] pr-[3px]">
          <svg width="16" height="16" viewBox="0 0 16 16"><path d="M16 0V16H0Z" fill="#dcdcdc" /></svg>
        </div>
        <div className="w-[382px] shrink-0 border-r border-[#d4d4d4] bg-[#e1e1e1] text-center text-[#217346]">A</div>
        <div className="w-[381px] shrink-0 border-r border-[#d4d4d4]" />
        <div className="w-[381px] shrink-0 border-r border-[#d4d4d4] text-center">C</div>
        <div className="w-[381px] shrink-0 border-r border-[#d4d4d4] text-center">D</div>
        <div className="min-w-0 flex-1 overflow-hidden pl-[183px]">E</div>
      </div>

      {/* cells */}
      <div className="min-h-0 flex-1 overflow-hidden">
        {rowData.map((name, i) => (
          <div key={i} className="flex h-[57px] border-b border-[#d4d4d4]">
            <div className={"flex w-[37px] items-end justify-center border-r border-[#ababab] text-[15px] leading-[20px] [font-family:'Liberation_Serif',serif] " + (i === 0 ? "bg-[#e1e1e1] text-[#217346]" : "text-[#444]")}>{i + 1}</div>
            <div className={"flex w-[382px] items-end border-r border-[#d4d4d4] pb-[11px] pl-[6px] text-[25px] font-medium leading-[30px] text-black " + (i === 0 ? "outline-2 -outline-offset-1 outline-[#217346]" : "")}>
              {name && <>{name}<span className="font-bold [font-family:'Noto_Sans_CJK_TC',sans-serif]">：</span></>}
            </div>
            <div className="w-[381px] border-r border-dashed border-[#8c8c8c]" />
            <div className="w-[381px] border-r border-[#d4d4d4]" />
            <div className="w-[381px] border-r border-dashed border-[#8c8c8c]" />
            <div className="flex-1" />
          </div>
        ))}
      </div>

      {/* sheet tabs and scroll */}
      <div className="flex h-[29px] shrink-0 items-center border-t border-[#ababab] bg-[#f3f3f3]">
        <svg width="6" height="10" viewBox="0 0 6 10" className="ml-[27px]"><path d="M6 0V10L0 5Z" fill="#bbb" /></svg>
        <svg width="6" height="10" viewBox="0 0 6 10" className="ml-[23px]"><path d="M0 0V10L6 5Z" fill="#bbb" /></svg>
        <div className="ml-[41px] flex h-[26px] w-[81px] items-center justify-center self-start border-x border-b-[3px] border-x-[#ababab] border-b-[#217346] bg-white pb-[3px] text-[17px] text-[#217346]">Sheet1</div>
        <div className="ml-[34px] flex h-[20px] w-[20px] items-center justify-center rounded-full border-2 border-[#8c8c8c]">
          <svg width="10" height="10" viewBox="0 0 10 10"><path d="M5 0V10M0 5H10" stroke="#777" strokeWidth="2" /></svg>
        </div>
        <div className="ml-[893px] flex w-[38px] flex-col items-center justify-center gap-[3px]">
          <i className="h-[2px] w-[2px] bg-[#999]" /><i className="h-[2px] w-[2px] bg-[#999]" /><i className="h-[2px] w-[2px] bg-[#999]" />
        </div>
        <div className="flex h-[19px] w-[363px] border border-[#ababab] bg-white">
          <div className="flex w-[18px] items-center justify-center border-r-2 border-[#ababab]">
            <svg width="5" height="9" viewBox="0 0 5 9"><path d="M5 0V9L0 4.5Z" fill="#777" /></svg>
          </div>
        </div>
        <div className="h-[19px] flex-1 bg-[#e6e6e6]" />
      </div>

      {/* status bar */}
      <div className="flex h-[21px] shrink-0 items-center bg-[#217346] pl-[7px] text-[15px] text-white">
        <span className="pt-[4px]">就绪</span>
        <svg width="15" height="15" viewBox="0 0 15 15" className="ml-[21px]">
          <rect x="2" y="3" width="13" height="12" fill="#fff" />
          <circle cx="3" cy="3" r="3" fill="#d8e8df" />
          <path d="M4 8H13M4 10.5H13M4 13H13" stroke="#217346" strokeDasharray="2 1" />
        </svg>
        <div className="ml-auto flex items-center">
          <div className="flex h-[20px] w-[41px] items-center justify-center bg-[#0a6332]">
            <svg width="13" height="14" viewBox="0 0 13 14"><path d="M.5 .5H12.5V13.5H.5ZM4.5 .5V13.5M8.5 .5V13.5M.5 4.700H12.5M.5 9H12.5" fill="none" stroke="#fff" /></svg>
          </div>
          <div className="flex h-[20px] w-[41px] items-center justify-center">
            <svg width="13" height="14" viewBox="0 0 13 14"><path d="M.5 .5H12.5V13.5H.5Z" fill="none" stroke="#fff" /><path d="M3.5 4H9.5M3.5 7H9.5M3.5 10H9.5" stroke="#fff" /></svg>
          </div>
          <div className="flex h-[20px] w-[41px] items-center justify-center">
            <svg width="13" height="14" viewBox="0 0 13 14"><path d="M.5 .5H12.5V13.5H.5Z" fill="none" stroke="#fff" /><path d="M3 0H6V7H3ZM7.5 0H10V5H7.5Z" fill="#fff" /></svg>
          </div>
          <div className="ml-[9px] h-[2px] w-[9px] bg-white" />
          <div className="ml-[4px] h-px w-[33px] bg-white" />
        </div>
      </div>

      {/* shapes gallery, hover strip and the red markup boxes */}
      <div className="absolute left-[308px] top-[143px] z-[5] h-[5px] w-[50px] bg-[#c7e4d4]" />
      <ShapesMenu />
      <Watermark />
      <div className="absolute left-[129px] top-[21px] z-30 h-[39px] w-[65px] border-[3px] border-[#ff3b3b]" />
      <div className="absolute left-[300px] top-[52px] z-30 h-[91px] w-[62px] border-[3px] border-[#ff3b3b]" />
      <div className="absolute left-[353px] top-[168px] z-30 h-[40px] w-[37px] border-[3px] border-[#ff3b3b]" />
    </div>
  )
}
